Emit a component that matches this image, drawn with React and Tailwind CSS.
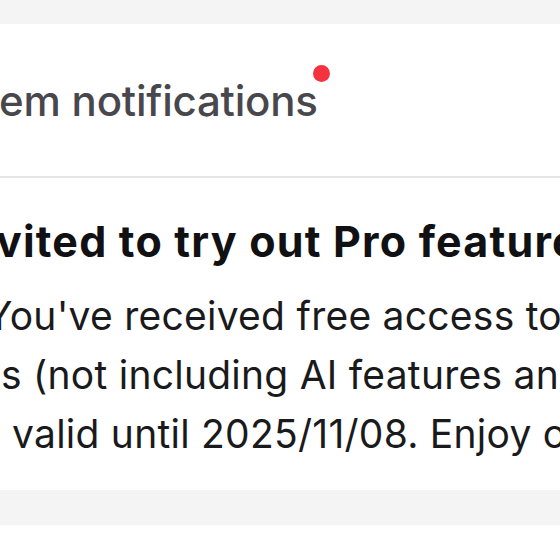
export default function App() {
  return (
    <div
      className="w-[560px] h-[560px] overflow-hidden bg-[#f4f4f5]"
      style={{ fontFamily: 'Inter, "Noto Sans", sans-serif' }}
    >
      <div className="h-[24px]" />

      {/* Header */}
      <div className="h-[154px] bg-white pt-[53px] border-b-2 border-[#e6e6e8]">
        <div className="relative inline-block whitespace-nowrap -ml-[1px] text-[42px] leading-[48px] font-medium text-[#48484c] tracking-[-0.2px]">
          em notifications
          <span className="absolute -right-[12px] -top-[12px] w-[17px] h-[17px] rounded-full bg-[#f5333f]" />
        </div>
      </div>

      {/* Notification */}
      <div className="bg-white pt-[39px] pb-[27px] text-[#111113]">
        <div className="whitespace-nowrap -ml-[4px] text-[43px] leading-[48px] font-bold tracking-[1.2px]">
          vited to try out Pro features
        </div>
        <div className="mt-[21px] text-[39px] leading-[59px] whitespace-nowrap tracking-[0.25px] text-[#1a1a1c]">
          <div className="-ml-[14px]">You've received free access to Pro</div>
          <div className="ml-[1px]">s (not including AI features and</div>
          <div className="ml-[12px]">valid until 2025/11/08. Enjoy our</div>
        </div>
      </div>

      <div className="h-[35px]" />
      <div className="h-[35px] bg-white" />
    </div>
  );
}
